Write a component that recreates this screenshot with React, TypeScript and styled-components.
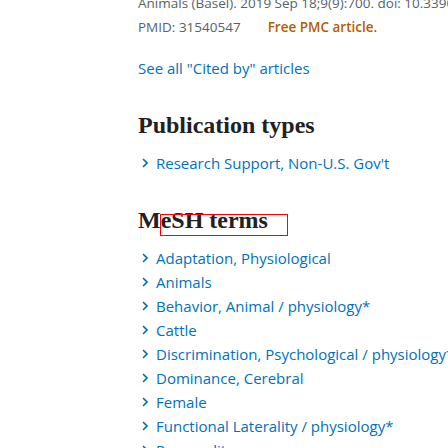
import styled, { createGlobalStyle } from "styled-components";

const GlobalStyle = createGlobalStyle`
  html, body {
    margin: 0;
    padding: 0;
    height: 100%;
    overflow: hidden;
    background: #ffffff;
  }
  body {
    font-family: "Open Sans", "Noto Sans", sans-serif;
  }
`;

const Page = styled.div`
  width: 448px;
  height: 448px;
  overflow: hidden;
  box-sizing: border-box;
  padding-left: 138px;
`;

const Content = styled.div`
  margin-top: -9px;
  white-space: nowrap;
  width: max-content;
`;

const Citation = styled.div`
  font-size: 13.5px;
  line-height: 24px;
  color: #56636a;
`;

const CitationLine = styled.div`
  display: flex;
  gap: 27px;
`;

const FreeLabel = styled.span`
  color: #b35c00;
  font-weight: 600;
`;

const CitedLink = styled.a`
  display: block;
  margin-top: 17px;
  font-size: 15px;
  line-height: 24px;
  color: #0071bc;
  text-decoration: none;
`;

const Section = styled.section<{ $gap: number }>`
  margin-top: ${(p) => p.$gap}px;
`;

const Heading = styled.h2`
  position: relative;
  display: inline-block;
  margin: 0 0 11px;
  font-family: "Liberation Serif", "Times New Roman", serif;
  font-weight: 700;
  font-size: 24px;
  line-height: 30px;
  color: #212121;
`;

const Marker = styled.span`
  position: absolute;
  left: 22px;
  top: 9px;
  width: 128px;
  height: 22px;
  border: 1px solid #ff0000;
  box-sizing: border-box;
`;

const TermList = styled.ul`
  list-style: none;
  margin: 0;
  padding: 0;
`;

const Term = styled.li`
  display: flex;
  align-items: center;
  gap: 8px;
  height: 24px;
  width: max-content;
  font-size: 15px;
  color: #0071bc;
  padding-left: 4px;

  svg {
    flex-shrink: 0;
  }
`;

const Chevron = () => (
  <svg width="6" height="10" viewBox="0 0 6 10" fill="none">
    <path d="M1 1l4 4-4 4" stroke="#0071bc" strokeWidth="1.6" />
  </svg>
);

const publicationTypes = ["Research Support, Non-U.S. Gov't"];

const meshTerms = [
  "Adaptation, Physiological",
  "Animals",
  "Behavior, Animal / physiology*",
  "Cattle",
  "Discrimination, Psychological / physiology*",
  "Dominance, Cerebral",
  "Female",
  "Functional Laterality / physiology*",
  "Personality",
];

export default function App() {
  return (
    <Page>
      <GlobalStyle />
      <Content>
        <Citation>
          <div>Animals (Basel). 2019 Sep 18;9(9):700. doi: 10.3390/ani9090700.</div>
          <CitationLine>
            <span>PMID: 31540547</span>
            <FreeLabel>Free PMC article.</FreeLabel>
          </CitationLine>
        </Citation>
        <CitedLink href="#">See all "Cited by" articles</CitedLink>
        <Section $gap={30}>
          <Heading>Publication types</Heading>
          <TermList>
            {publicationTypes.map((t) => (
              <Term key={t}>
                <Chevron />
                {t}
              </Term>
            ))}
          </TermList>
        </Section>
        <Section $gap={30}>
          <Heading>
            MeSH terms
            <Marker />
          </Heading>
          <TermList>
            {meshTerms.map((t) => (
              <Term key={t}>
                <Chevron />
                {t}
              </Term>
            ))}
          </TermList>
        </Section>
      </Content>
    </Page>
  );
}
